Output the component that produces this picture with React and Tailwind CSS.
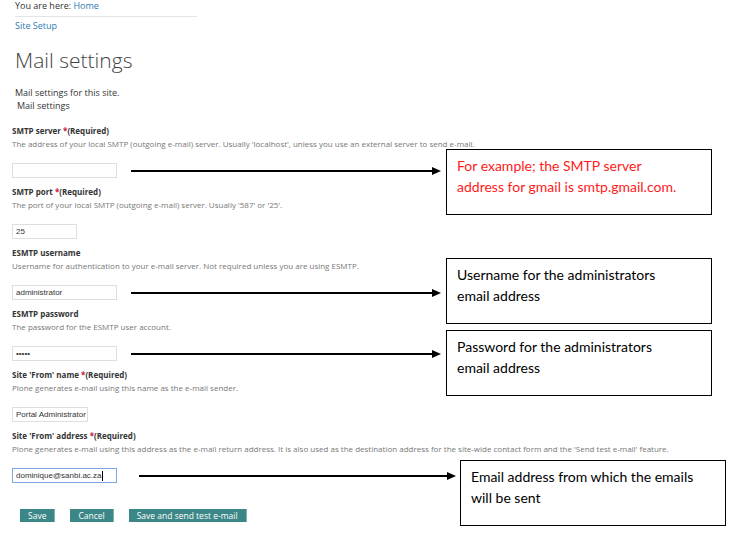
import React from "react";

const fields = [
  {
    label: "SMTP server",
    required: true,
    help: "The address of your local SMTP (outgoing e-mail) server. Usually 'localhost', unless you use an external server to send e-mail.",
    value: "",
    width: "w-[105px]",
    note: { lines: ["For example; the SMTP server", "address for gmail is smtp.gmail.com."], red: true },
  },
  {
    label: "SMTP port",
    required: true,
    help: "The port of your local SMTP (outgoing e-mail) server. Usually '587' or '25'.",
    value: "25",
    width: "w-[65px]",
  },
  {
    label: "ESMTP username",
    help: "Username for authentication to your e-mail server. Not required unless you are using ESMTP.",
    value: "administrator",
    width: "w-[105px]",
    note: { lines: ["Username for the administrators", "email address"] },
  },
  {
    label: "ESMTP password",
    help: "The password for the ESMTP user account.",
    value: "\u2022\u2022\u2022\u2022\u2022",
    width: "w-[105px]",
    note: { lines: ["Password for the administrators", "email address"] },
  },
  {
    label: "Site 'From' name",
    required: true,
    help: "Plone generates e-mail using this name as the e-mail sender.",
    value: "Portal Administrator",
    width: "w-[76px]",
  },
  {
    label: "Site 'From' address",
    required: true,
    help: "Plone generates e-mail using this address as the e-mail return address. It is also used as the destination address for the site-wide contact form and the 'Send test e-mail' feature.",
    value: "dominique@sanbi.ac.za",
    width: "w-[105px]",
    focused: true,
    note: { lines: ["Email address from which the emails", "will be sent"] },
  },
];

const Arrow = ({ width }) => (
  <svg width={width} height="10" viewBox={`0 0 ${width} 10`} className="shrink-0">
    <line x1="0" y1="5" x2={width - 8} y2="5" stroke="#000" strokeWidth="2" />
    <polygon points={`${width - 9},1 ${width},5 ${width - 9},9`} fill="#000" />
  </svg>
);

const Note = ({ note, focused }) => (
  <div
    className={`absolute top-0 w-[266px] h-[66px] border-[1.5px] border-black bg-white pl-[10px] pt-[5px] text-[14px] leading-[21px] ${
      note.red ? "text-[#ff1a1a]" : "text-black"
    } ${focused ? "left-[448px]" : "left-[434px]"}`}
    style={{ fontFamily: "Lato, 'Open Sans', sans-serif" }}
  >
    {note.lines.map((l) => (
      <div key={l}>{l}</div>
    ))}
  </div>
);

const noteTops = ["top-[-14px]", "", "top-[-27px]", "top-[-16px]", "", "top-[-8px]"];

const App = () => {
  return (
    <div
      className="relative w-[744px] h-[542px] overflow-hidden bg-white text-[#333]"
      style={{ fontFamily: "'Open Sans', sans-serif" }}
    >
      <div className="pl-[15px]">
        <div className="text-[9px] leading-[11px]">
          You are here: <span className="text-[#2e7bb0]">Home</span>
        </div>
        <div className="w-[182px] h-px bg-[#e4e4e4] mt-[5px]" />
        <div className="text-[9px] leading-[11px] text-[#2e7bb0] mt-[3px]">Site Setup</div>
        <h1 className="text-[21px] leading-[26px] font-light text-[#444] mt-[16px]">Mail settings</h1>
        <div className="text-[9px] leading-[12px] mt-[14px]">Mail settings for this site.</div>
        <div className="text-[9px] leading-[12px] ml-[2px] mt-px">Mail settings</div>
      </div>

      <div className="px-[12px] mt-[13px]">
        {fields.map((f, i) => (
          <div key={f.label} className={i === 0 ? "" : "mt-[8px]"}>
            <div className="text-[8px] leading-[12px] font-bold text-[#333]">
              {f.label}
              {f.required && (
                <span>
                  {" "}
                  <span className="text-[#c4183c]">*</span>(Required)
                </span>
              )}
            </div>
            <div className="text-[8px] leading-[12px] text-[#777] mt-px">{f.help}</div>
            <div className="relative flex items-center mt-[13px] h-[15px]">
              <div
                className={`${f.width} h-[15px] shrink-0 flex items-center px-[3px] text-[8px] bg-white whitespace-nowrap overflow-hidden ${
                  f.focused ? "border border-[#7ea6de]" : "border border-[#dedede]"
                }`}
                style={{ fontFamily: "'Liberation Sans', Arial, sans-serif" }}
              >
                {f.value}
                {f.focused && <span className="w-px h-[10px] bg-black" />}
              </div>
              {f.note && (
                <div className={f.focused ? "ml-[22px]" : "ml-[14px]"}>
                  <Arrow width={f.focused ? 317 : 310} />
                </div>
              )}
              {f.note && (
                <div className={`absolute ${noteTops[i]} left-0`}>
                  <Note note={f.note} focused={f.focused} />
                </div>
              )}
            </div>
          </div>
        ))}

        <div className="flex gap-[15px] ml-[8px] mt-[26px]">
          {["Save", "Cancel", "Save and send test e-mail"].map((b) => (
            <button
              key={b}
              className="h-[13px] px-[8px] bg-[#3b8686] text-white text-[8.5px] leading-[13px] border-r border-[#7fb0b0]"
            >
              {b}
            </button>
          ))}
        </div>
      </div>
    </div>
  );
};

export default App;
